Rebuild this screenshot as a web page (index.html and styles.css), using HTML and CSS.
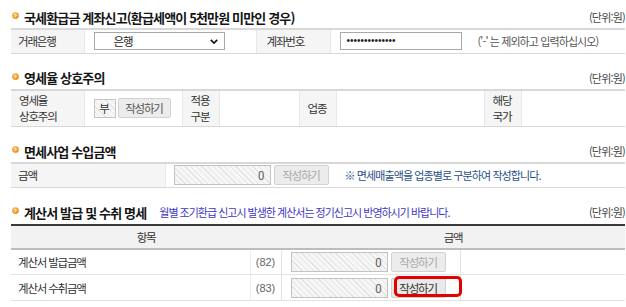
FILE: index.html
```html
<!DOCTYPE html>
<html lang="ko">
<head>
<meta charset="utf-8">
<title>환급 신고</title>
<link rel="stylesheet" href="styles.css">
</head>
<body>
<div class="page">

  <section class="sec">
    <div class="head">
      <svg class="bullet" viewBox="0 0 10 10"><defs><radialGradient id="g1" cx="40%" cy="35%" r="70%"><stop offset="0" stop-color="#ffc766"/><stop offset="1" stop-color="#e8820f"/></radialGradient></defs><circle cx="5" cy="5" r="4.8" fill="url(#g1)"/><path d="M4 3 L6 5 L4 7" fill="none" stroke="#fff" stroke-width="1.3"/></svg>
      <h2>국세환급금 계좌신고(환급세액이 5천만원 미만인 경우)</h2>
      <span class="unit">(단위:원)</span>
    </div>
    <table class="grid t1">
      <colgroup><col class="c73"><col class="c172"><col class="c74"><col></colgroup>
      <tr>
        <th class="lab">거래은행</th>
        <td class="pad9">
          <div class="select"><span class="sel-text">은행</span>
            <svg class="chev" viewBox="0 0 10 6"><path d="M1 1 L5 5 L9 1" fill="none" stroke="#111" stroke-width="2"/></svg>
          </div>
        </td>
        <th class="lab lab10">계좌번호</th>
        <td class="pad9">
          <div class="inline">
            <div class="pw">••••••••••••••</div>
            <span class="hint">('-' 는 제외하고 입력하십시오)</span>
          </div>
        </td>
      </tr>
    </table>
  </section>

  <section class="sec">
    <div class="head">
      <svg class="bullet" viewBox="0 0 10 10"><circle cx="5" cy="5" r="4.8" fill="url(#g1)"/><path d="M4 3 L6 5 L4 7" fill="none" stroke="#fff" stroke-width="1.3"/></svg>
      <h2>영세율 상호주의</h2>
      <span class="unit">(단위:원)</span>
    </div>
    <table class="grid t2">
      <colgroup><col class="c73"><col class="c98"><col class="c37"><col class="c80"><col class="c37"><col class="c148"><col class="c37"><col></colgroup>
      <tr>
        <th class="lab two">영세율<br>상호주의</th>
        <td class="pad9">
          <div class="inline g2"><span class="yn">부</span><span class="btn dark w53">작성하기</span></div>
        </td>
        <th class="lab two">적용<br>구분</th>
        <td></td>
        <th class="lab">업종</th>
        <td></td>
        <th class="lab two">해당<br>국가</th>
        <td></td>
      </tr>
    </table>
  </section>

  <section class="sec">
    <div class="head">
      <svg class="bullet" viewBox="0 0 10 10"><circle cx="5" cy="5" r="4.8" fill="url(#g1)"/><path d="M4 3 L6 5 L4 7" fill="none" stroke="#fff" stroke-width="1.3"/></svg>
      <h2>면세사업 수입금액</h2>
      <span class="unit">(단위:원)</span>
    </div>
    <table class="grid t3">
      <colgroup><col class="c154"><col></colgroup>
      <tr>
        <th class="lab">금액</th>
        <td class="pad8">
          <div class="inline g3">
            <span class="amt">0</span><span class="btn off">작성하기</span>
            <span class="note1">※ 면세매출액을 업종별로 구분하여 작성합니다.</span>
          </div>
        </td>
      </tr>
    </table>
  </section>

  <section class="sec s4">
    <div class="head">
      <svg class="bullet" viewBox="0 0 10 10"><circle cx="5" cy="5" r="4.8" fill="url(#g1)"/><path d="M4 3 L6 5 L4 7" fill="none" stroke="#fff" stroke-width="1.3"/></svg>
      <h2>계산서 발급 및 수취 명세</h2>
      <span class="note2">월별 조기환급 신고시 발생한 계산서는 정기신고시 반영하시기 바랍니다.</span>
      <span class="unit">(단위:원)</span>
    </div>
    <table class="list">
      <colgroup><col class="c239"><col class="c31"><col class="c179"><col></colgroup>
      <tr class="hrow"><th colspan="2">항목</th><th colspan="2">금액</th></tr>
      <tr>
        <td class="name">계산서 발급금액</td>
        <td class="code">(82)</td>
        <td class="pad9"><div class="inline g3"><span class="amt">0</span><span class="btn off">작성하기</span></div></td>
        <td class="vl"></td>
      </tr>
      <tr>
        <td class="name">계산서 수취금액</td>
        <td class="code">(83)</td>
        <td class="pad9"><div class="inline g3"><span class="amt">0</span><span class="mark"><span class="btn on">작성하기</span><span class="ring"></span></span></div></td>
        <td class="vl"></td>
      </tr>
    </table>
  </section>

</div>
</body>
</html>
```
FILE: styles.css
```css
* { box-sizing: border-box; }
html, body { margin: 0; background: #fff; overflow: hidden; }
body {
  font-family: "Noto Sans CJK KR", "Noto Sans", sans-serif;
  font-size: 11.5px;
  color: #333;
  letter-spacing: -1.2px;
}
.page { width: 614px; margin-left: 11px; padding-top: 6px; }
.sec + .sec { margin-top: 13px; }

.head { display: flex; align-items: center; height: 22px; }
.s4 .head { height: 23px; }
.bullet { width: 7px; height: 7px; margin: 0 5px 3px 1px; flex: none; }
h2 { margin: 0; font-size: 13px; font-weight: bold; color: #151515; letter-spacing: -0.85px; white-space: nowrap; }
.unit { margin-left: auto; color: #444; font-size: 11px; letter-spacing: -0.8px; white-space: nowrap; }
.note2 { margin-left: 13px; color: #3f36c4; font-size: 11px; letter-spacing: -1px; white-space: nowrap; }

table { width: 100%; border-collapse: collapse; table-layout: fixed; }
.c73 { width: 73px; } .c172 { width: 172px; } .c74 { width: 74px; }
.c98 { width: 98px; } .c37 { width: 37px; } .c80 { width: 80px; } .c148 { width: 148px; }
.c154 { width: 154px; }
.c239 { width: 239px; } .c31 { width: 31px; } .c179 { width: 179px; }

.grid { border-top: 2px solid #d8d8d8; }
.grid td, .grid th { border-bottom: 1px solid #d8d8d8; padding: 0; vertical-align: middle; }
.grid .lab {
  background: #f5f5f5; font-weight: normal; text-align: left; padding-left: 7px;
  border-left: 1px solid #e8e8e8; border-right: 1px solid #e8e8e8;
  line-height: 14px; color: #333;
}
.grid .two { line-height: 16px; }
.grid .lab:first-child { border-left: none; }
.t1 td, .t1 th { height: 24px; }
.t2 td, .t2 th { height: 37px; }
.t2 .lab { padding-left: 8px; }
.t3 td, .t3 th { height: 24px; }
.lab10 { padding-left: 10px !important; }
.pad9 { padding-left: 9px !important; }
.pad8 { padding-left: 8px !important; }

.inline { display: flex; align-items: center; }
.g2 { gap: 2px; }
.g3 { gap: 3px; }

.select {
  width: 131px; height: 18px; border: 1px solid #a9a9a9; background: #fff;
  display: flex; align-items: center; padding-left: 19px; padding-right: 6px;
}
.sel-text { color: #222; }
.chev { width: 8px; height: 5px; margin-left: auto; }

.pw {
  width: 122px; height: 18px; border: 1px solid #a9a9a9; padding-left: 6px;
  font-family: "Liberation Sans", sans-serif; font-size: 10px; letter-spacing: 0;
  line-height: 16px; color: #222;
}
.hint { margin-left: 16px; color: #555; font-size: 11px; letter-spacing: -0.9px; }

.yn {
  width: 22px; height: 19px; border: 1px solid #c4c4c4; text-align: center; line-height: 17px;
  background: repeating-linear-gradient(45deg, #f7f7f7 0 3px, #e6e6e6 3px 4px);
  color: #333; letter-spacing: 0;
}
.btn {
  display: inline-block; height: 20px; line-height: 18px; padding: 0 6px;
  border: 1px solid #d2d2d2; border-radius: 2px; background: #ececec;
  text-align: center; width: 55px; white-space: nowrap;
}
.w53 { width: 53px; }
.dark { color: #555; }
.off { color: #a8a8a8; }
.on { color: #333; background: #e9e9e9; }

.amt {
  width: 97px; height: 20px; border: 1px solid #c2c2c2; text-align: right; padding-right: 5px;
  line-height: 18px; color: #555; letter-spacing: 0;
  background: repeating-linear-gradient(45deg, #f6f6f6 0 3px, #e3e3e3 3px 4px);
}
.note1 { margin-left: 13px; color: #285087; font-size: 11px; letter-spacing: -0.9px; white-space: nowrap; }

.list { border-top: 2px solid #3a3a3a; }
.list .hrow th {
  height: 24px; background: #f2f2f2; font-weight: normal; color: #333;
  border-bottom: 2px solid #bdbdbd; text-align: center; padding: 0;
}
.list td { height: 26px; border-bottom: 1px solid #e3e3e3; padding: 0; vertical-align: middle; }
.list .name { padding-left: 7px; }
.list .code {
  text-align: center; color: #666; font-family: "Liberation Sans", sans-serif;
  font-size: 11px; letter-spacing: 0; border-left: 1px solid #ececec; border-right: 1px solid #e3e3e3;
}
.list .vl { border-left: 1px solid #e3e3e3; }

.mark { position: relative; display: inline-block; }
.ring {
  position: absolute; left: 3px; top: -2px; width: 68px; height: 21px;
  border: 3px solid #e40000; border-radius: 5px;
}
```
